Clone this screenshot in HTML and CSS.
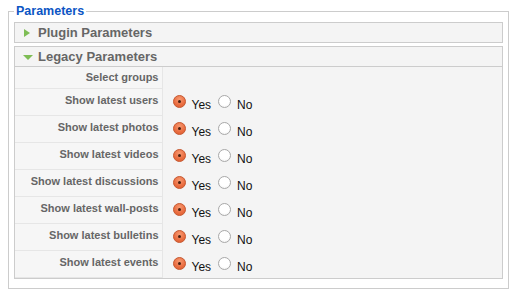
FILE: index.html
```html
<!DOCTYPE html>
<html>
<head>
<meta charset="utf-8">
<link rel="stylesheet" href="styles.css">
</head>
<body>
<fieldset class="params">
  <legend class="legend">Parameters</legend>
  <div class="panel">
    <div class="panel-head"><span class="arrow-right"></span>Plugin Parameters</div>
  </div>
  <div class="panel">
    <div class="panel-head open"><span class="arrow-down"></span>Legacy Parameters</div>
    <table class="ptable">
      <colgroup><col class="c-key"><col></colgroup>
      <tr class="first"><td class="key">Select groups</td><td class="val"></td></tr>
      <tr><td class="key">Show latest users</td><td class="val"><span class="radio on"></span><span class="opt">Yes</span><span class="radio"></span><span class="opt">No</span></td></tr>
      <tr><td class="key">Show latest photos</td><td class="val"><span class="radio on"></span><span class="opt">Yes</span><span class="radio"></span><span class="opt">No</span></td></tr>
      <tr><td class="key">Show latest videos</td><td class="val"><span class="radio on"></span><span class="opt">Yes</span><span class="radio"></span><span class="opt">No</span></td></tr>
      <tr><td class="key">Show latest discussions</td><td class="val"><span class="radio on"></span><span class="opt">Yes</span><span class="radio"></span><span class="opt">No</span></td></tr>
      <tr><td class="key">Show latest wall-posts</td><td class="val"><span class="radio on"></span><span class="opt">Yes</span><span class="radio"></span><span class="opt">No</span></td></tr>
      <tr><td class="key">Show latest bulletins</td><td class="val"><span class="radio on"></span><span class="opt">Yes</span><span class="radio"></span><span class="opt">No</span></td></tr>
      <tr><td class="key">Show latest events</td><td class="val"><span class="radio on"></span><span class="opt">Yes</span><span class="radio"></span><span class="opt">No</span></td></tr>
    </table>
  </div>
</fieldset>
</body>
</html>
```
FILE: styles.css
```css
html, body {
  margin: 0;
  padding: 0;
  background: #fff;
  font-family: "Liberation Sans", Arial, sans-serif;
}
.params {
  margin: 4px 11px 0 8px;
  padding: 3px 5px 6px 5px;
  border: 1px solid #ccc;
  min-width: 0;
}
.legend {
  padding: 0 2px;
  margin-left: 0;
  color: #0b55c4;
  font-weight: bold;
  font-size: 12.5px;
  line-height: 15px;
}
.panel {
  background: #f4f4f4;
  border: 1px solid #ccc;
  margin-bottom: 3px;
}
.panel-head {
  height: 19px;
  line-height: 19px;
  font-size: 13px;
  font-weight: bold;
  color: #666;
  padding-left: 8px;
  display: flex;
  align-items: center;
}
.panel-head.open {
  border-bottom: 1px solid #ccc;
}
.arrow-right {
  width: 0;
  height: 0;
  border-top: 4.5px solid transparent;
  border-bottom: 4.5px solid transparent;
  border-left: 6px solid #7ebd55;
  margin-right: 8px;
  margin-left: 1px;
}
.arrow-down {
  width: 0;
  height: 0;
  border-left: 5px solid transparent;
  border-right: 5px solid transparent;
  border-top: 5px solid #7ebd55;
  margin-right: 5px;
  margin-top: 2px;
}
.ptable {
  border-collapse: collapse;
  table-layout: fixed;
  width: 100%;
}
.c-key {
  width: 147px;
}
.ptable td {
  padding: 0;
}
.key {
  height: 27px;
  text-align: right;
  font-size: 11px;
  font-weight: bold;
  color: #666;
  background: #f6f6f6;
  border-bottom: 1px solid #e6e6e6;
  border-right: 1px solid #e6e6e6;
  padding: 0 3px 3px 0 !important;
  box-sizing: border-box;
  vertical-align: middle;
  white-space: nowrap;
}
.first .key {
  height: 21px;
  padding-bottom: 1px !important;
}
.val {
  padding-left: 10px !important;
  font-size: 12px;
  color: #111;
  white-space: nowrap;
}
.radio {
  display: inline-block;
  width: 11px;
  height: 11px;
  border-radius: 50%;
  border: 1px solid #a8a8a8;
  background: radial-gradient(circle at 50% 35%, #fff 0%, #fff 55%, #ececec 100%);
  vertical-align: -2px;
  position: relative;
}
.radio.on {
  border-color: #c65a33;
  background: radial-gradient(circle at 50% 30%, #f79a72 0%, #ea6d40 60%, #d85a2c 100%);
}
.radio.on::after {
  content: "";
  position: absolute;
  left: 4px;
  top: 4px;
  width: 3px;
  height: 3px;
  border-radius: 50%;
  background: #4a2010;
}
.opt {
  display: inline-block;
  margin-left: 6px;
  margin-right: 7px;
  position: relative;
  top: 3px;
}
```
